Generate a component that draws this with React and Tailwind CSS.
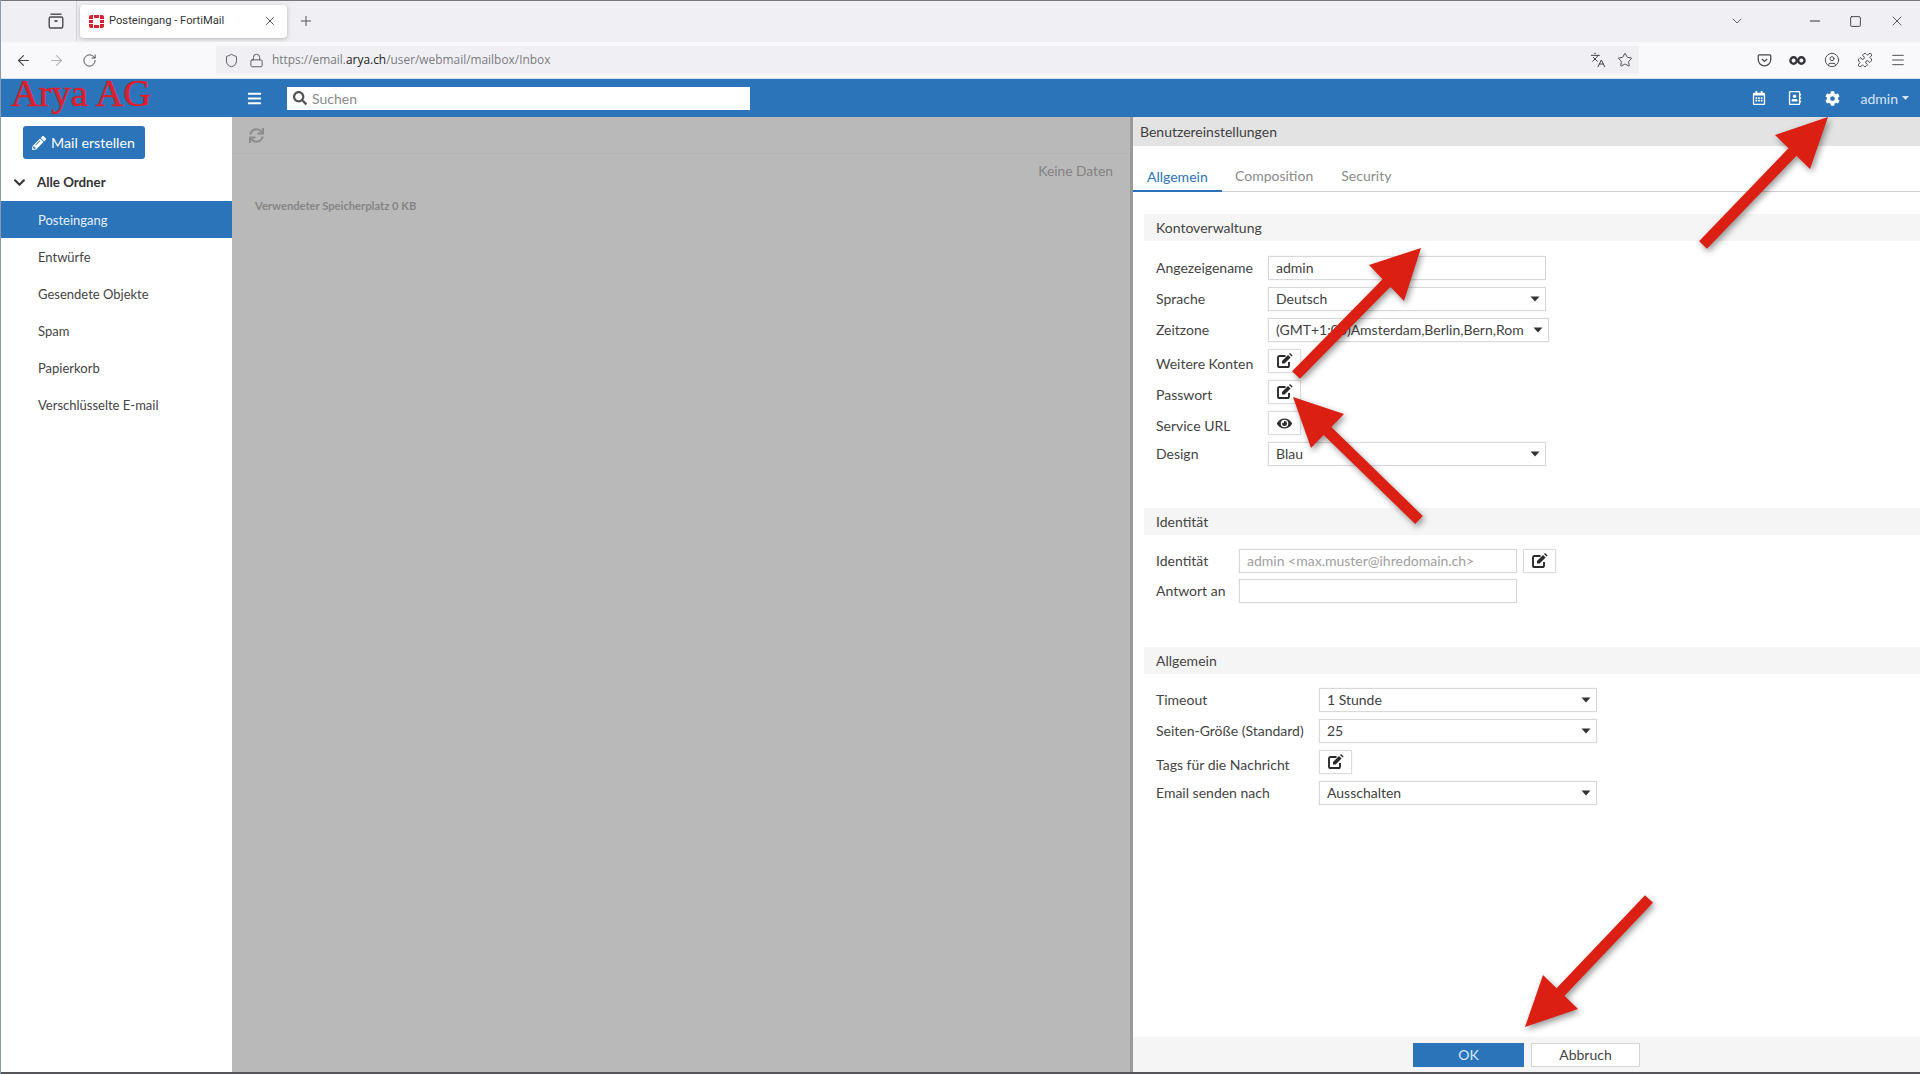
import React from "react";
import { ArrowLeft, ArrowRight, RotateCw, Shield, Lock, Languages, Star, Puzzle, Menu, ChevronDown, Minus, Square, X, Plus, CircleUser } from "lucide-react";
import { FaBars, FaSearch, FaPencilAlt, FaChevronDown, FaSync, FaEye, FaCog, FaRegCalendarAlt, FaRegAddressBook } from "react-icons/fa";

const lato = "font-['Lato','Open_Sans',sans-serif]";

function Arrow({ tip, c1, c2, tail, w }) {
  const mx = (c1[0] + c2[0]) / 2;
  const my = (c1[1] + c2[1]) / 2;
  const dx = tail[0] - mx;
  const dy = tail[1] - my;
  const len = Math.hypot(dx, dy);
  const nx = (-dy / len) * w;
  const ny = (dx / len) * w;
  const side = (c1[0] - mx) * nx + (c1[1] - my) * ny;
  const s = side < 0 ? -1 : 1;
  const pts = [tip, c1, [mx + s * nx, my + s * ny], [tail[0] + s * nx, tail[1] + s * ny], [tail[0] - s * nx, tail[1] - s * ny], [mx - s * nx, my - s * ny], c2];
  return <polygon points={pts.map((p) => p.join(",")).join(" ")} fill="#dc1f13" />;
}

function EditIcon() {
  return (
    <svg width="17" height="16" viewBox="0 0 17 16">
      <path d="M9.5 3H3.6A1.6 1.6 0 0 0 2 4.6v7.8A1.6 1.6 0 0 0 3.6 14h7.8a1.6 1.6 0 0 0 1.6-1.6V9" fill="none" stroke="#2a2a2a" strokeWidth="1.9" />
      <path d="M6 8l6-6 2.6 2.6-6 6H6z" fill="#2a2a2a" />
      <path d="M13 1l1-1 2.6 2.6-1 1z" fill="#2a2a2a" />
    </svg>
  );
}

function Field({ children, muted, wide, caret }) {
  return (
    <div className={`h-[24px] ${wide ? "w-[281px]" : "w-[278px]"} border border-[#d8d8d8] bg-white pl-[7px] pr-[5px] pb-[1px] flex items-center justify-between text-[14px] ${muted ? "text-[#a0a0a0]" : "text-[#3f3f3f]"} shadow-[0_0_2px_rgba(0,0,0,0.08)]`}>
      <span className="whitespace-nowrap overflow-hidden">{children}</span>
      {caret && (
        <svg width="10" height="6" viewBox="0 0 10 6" className="shrink-0 ml-[5px]">
          <path d="M0.5 0.5h9L5 5.5z" fill="#333" />
        </svg>
      )}
    </div>
  );
}

function IconBtn({ children }) {
  return (
    <button className="w-[33px] h-[24px] border border-[#dcdcdc] bg-white flex items-center justify-center text-[#2e2e2e] text-[15px] shadow-[0_0_2px_rgba(0,0,0,0.08)]">
      {children}
    </button>
  );
}

function Row({ label, col, lift, children }) {
  return (
    <div className="flex h-[24px] items-center">
      <div className={`${col} shrink-0 text-[14px] text-[#444] whitespace-nowrap ${lift ? "pt-[4px]" : "pb-[1px]"}`}>{label}</div>
      {children}
    </div>
  );
}

function SectionHead({ children, className = "" }) {
  return <div className={`ml-[11px] h-[27px] bg-[#f5f5f5] pl-[12px] flex items-center text-[14px] text-[#444] ${className}`}>{children}</div>;
}

const folders = ["Posteingang", "Entwürfe", "Gesendete Objekte", "Spam", "Papierkorb", "Verschlüsselte E-mail"];

export default function App() {
  return (
    <div className="relative w-[1920px] h-[1074px] overflow-hidden flex flex-col bg-white border-l border-[#8a9bb0]">
      {/* tab strip */}
      <div className="h-[42px] shrink-0 bg-[#f0f0f4] border-t border-[#77777c] pb-[1px] flex items-center font-['Open_Sans',sans-serif] text-[#3a3a3f]">
        <div className="w-[76px] h-full shrink-0 pl-[46px] flex items-center border-r border-[#d4d4da]">
          <svg width="18" height="18" viewBox="0 0 18 18" fill="none" stroke="#4a4a4f" strokeWidth="1.4">
            <path d="M3.5 2.2h11" />
            <rect x="2.2" y="5" width="13.6" height="11" rx="1.5" />
            <path d="M7.5 9h3" strokeWidth="1.8" />
          </svg>
        </div>
        <div className="ml-[3px] w-[207px] h-[33px] bg-white rounded-[4px] shadow-[0_1px_4px_rgba(0,0,0,0.25)] flex items-center pl-[9px] pr-[10px]">
          <svg width="15" height="13" viewBox="0 0 15 13" fill="#d8202e" className="shrink-0">
            <path d="M0 4V2a2 2 0 0 1 2-2h2v4zM5 0h5v3H5zM11 0h2a2 2 0 0 1 2 2v2h-4zM0 5h4v3H0zM11 5h4v3h-4zM0 9h4v4H2a2 2 0 0 1-2-2zM5 10h5v3H5zM11 9h4v2a2 2 0 0 1-2 2h-2z" />
          </svg>
          <span className="ml-[5px] text-[11.2px] whitespace-nowrap text-[#333] font-['Roboto',sans-serif]">Posteingang - FortiMail</span>
          <X className="ml-auto text-[#444]" size={14} strokeWidth={1.6} />
        </div>
        <Plus className="ml-[11px] text-[#555]" size={16} strokeWidth={1.5} />
        <ChevronDown className="ml-auto mr-[62px] text-[#555]" size={16} strokeWidth={1.4} />
        <Minus className="text-[#333]" size={16} strokeWidth={1.6} />
        <Square className="ml-[26px] text-[#333]" size={13} strokeWidth={1.6} />
        <X className="ml-[27px] mr-[15px] text-[#333]" size={16} strokeWidth={1.2} />
      </div>

      {/* nav bar */}
      <div className="h-[36px] shrink-0 bg-[#f9f9fb] flex items-center pl-[6px] font-['Open_Sans',sans-serif]">
        <div className="w-[33px] flex justify-center text-[#44444a]"><ArrowLeft size={17} strokeWidth={1.5} /></div>
        <div className="w-[33px] flex justify-center text-[#b4b4b8]"><ArrowRight size={17} strokeWidth={1.5} /></div>
        <div className="w-[33px] flex justify-center text-[#44444a]"><RotateCw size={15} strokeWidth={1.5} /></div>
        <div className="ml-[110px] w-[1423px] h-[28px] bg-[#f0f0f4] flex items-center pl-[8px] pr-[6px]">
          <Shield size={15} strokeWidth={1.5} className="text-[#55555a]" />
          <Lock size={15} strokeWidth={1.5} className="ml-[10px] text-[#55555a]" />
          <span className="ml-[8px] text-[11.9px] text-[#7b7b80] whitespace-nowrap">
            https://email.<span className="text-[#222]">arya.ch</span>/user/webmail/mailbox/Inbox
          </span>
          <Languages size={16} strokeWidth={1.5} className="ml-auto text-[#44444a]" />
          <Star size={16} strokeWidth={1.4} className="ml-[11px] text-[#44444a]" />
        </div>
        <div className="ml-auto mr-[14px] w-[149px] flex items-center justify-between text-[#44444a]">
          <svg width="15" height="15" viewBox="0 0 16 16" fill="none" stroke="#44444a" strokeWidth="1.3">
            <path d="M2.5 2h11A1.2 1.2 0 0 1 14.7 3.2V7A6.7 6.7 0 0 1 1.3 7V3.2A1.2 1.2 0 0 1 2.5 2z" />
            <path d="M5.2 6.4L8 9l2.8-2.6" />
          </svg>
          <svg width="17" height="9" viewBox="0 0 17 9" fill="none" stroke="#33333a" strokeWidth="2.4">
            <circle cx="4.6" cy="4.5" r="3.2" />
            <circle cx="12.4" cy="4.5" r="3.2" />
          </svg>
          <CircleUser size={16} strokeWidth={1.4} />
          <Puzzle size={16} strokeWidth={1.4} />
          <Menu size={16} strokeWidth={1.4} />
        </div>
      </div>

      {/* app header */}
      <div className={`h-[39px] shrink-0 bg-[#2b74ba] border-t border-[#cfe0ef] flex items-center ${lato}`}>
        <div className="w-[231px] h-full shrink-0 relative">
          <span className="absolute left-[10px] top-[-8px] text-[38.5px] leading-[44px] text-[#d8202e] [-webkit-text-stroke:0.6px_#d8202e] font-['Liberation_Serif',serif] whitespace-nowrap">Arya AG</span>
        </div>
        <FaBars className="ml-[15px] text-white text-[15px]" />
        <div className="ml-[25px] w-[463px] h-[23px] bg-white flex items-center pl-[6px] text-[14px] text-[#8a8a8a]">
          <FaSearch className="text-[#555] text-[14px]" />
          <span className="ml-[5px]">Suchen</span>
        </div>
        <div className="ml-auto flex items-center text-white pr-[11px]">
          <FaRegCalendarAlt className="text-[14px]" />
          <FaRegAddressBook className="ml-[22px] text-[14px]" />
          <FaCog className="ml-[23px] text-[15px]" />
          <span className="ml-[21px] text-[14px] text-[#d5e6f5]">admin</span>
          <svg width="7" height="4" viewBox="0 0 7 4" className="ml-[4px]"><path d="M0 0h7L3.5 4z" fill="#d5e6f5" /></svg>
        </div>
      </div>

      {/* body */}
      <div className={`flex-1 min-h-0 flex ${lato}`}>
        <aside className="w-[231px] shrink-0 bg-white pt-[9px]">
          <button className="ml-[22px] w-[122px] h-[33px] bg-[#2b74ba] rounded-[3px] flex items-center pl-[9px] text-white text-[14.2px]">
            <FaPencilAlt className="text-[14px]" />
            <span className="ml-[5px] whitespace-nowrap">Mail erstellen</span>
          </button>
          <div className="h-[42px] pt-[5px] flex items-center pl-[12px] text-[#333]">
            <FaChevronDown className="text-[13px]" />
            <span className="ml-[11px] text-[13.3px] font-bold">Alle Ordner</span>
          </div>
          {folders.map((f, i) => (
            <div key={f} className={`h-[37px] pt-[2px] flex items-center pl-[37px] text-[13px] ${i === 0 ? "bg-[#2b74ba] text-[#e6f0fa]" : "text-[#444]"}`}>
              {f}
            </div>
          ))}
        </aside>

        <main className="w-[898px] shrink-0 bg-[#b9b9b9]">
          <div className="h-[37px] border-b border-[#b2b2b2] pl-[17px] flex items-center">
            <FaSync className="text-[15px] text-[#8c8c8c]" />
          </div>
          <div className="h-[35px] flex items-center justify-end pr-[17px] text-[13.8px] text-[#828282]">Keine Daten</div>
          <div className="pl-[23px] pt-[9px] text-[11.2px] font-bold text-[#858585]">Verwendeter Speicherplatz 0 KB</div>
        </main>

        <section className="flex-1 min-w-0 bg-white border-l-[3px] border-[#9a9a9a] flex flex-col">
          <div className="h-[29px] shrink-0 bg-[#e3e3e3] pl-[7px] flex items-center text-[14px] text-[#3f3f3f]">Benutzereinstellungen</div>
          <div className="h-[46px] shrink-0 border-b border-[#cfcfcf] flex items-end text-[14px] text-[#8a8a8a]">
            <div className="w-[89px] h-[46px] -mb-px border-b-2 border-[#2b74ba] pl-[14px] pt-[20px] text-[#2b74ba]">Allgemein</div>
            <div className="ml-[13px] h-[46px] pt-[20px]">Composition</div>
            <div className="ml-[28px] h-[46px] pt-[20px]">Security</div>
          </div>

          <SectionHead className="mt-[22px]">Kontoverwaltung</SectionHead>
          <div className="mt-[15px] pl-[23px] flex flex-col gap-[7px]">
            <Row label="Angezeigename" col="w-[112px]"><Field>admin</Field></Row>
            <Row label="Sprache" col="w-[112px]"><Field caret>Deutsch</Field></Row>
            <Row label="Zeitzone" col="w-[112px]"><Field caret wide>(GMT+1:00)Amsterdam,Berlin,Bern,Rom</Field></Row>
            <Row label="Weitere Konten" col="w-[112px]" lift><IconBtn><EditIcon /></IconBtn></Row>
            <Row label="Passwort" col="w-[112px]" lift><IconBtn><EditIcon /></IconBtn></Row>
            <Row label="Service URL" col="w-[112px]" lift><IconBtn><FaEye /></IconBtn></Row>
            <Row label="Design" col="w-[112px]"><Field caret>Blau</Field></Row>
          </div>

          <SectionHead className="mt-[42px]">Identität</SectionHead>
          <div className="mt-[14px] pl-[23px] flex flex-col gap-[6px]">
            <Row label="Identität" col="w-[83px]">
              <Field muted>{"admin <max.muster@ihredomain.ch>"}</Field>
              <div className="ml-[6px]"><IconBtn><EditIcon /></IconBtn></div>
            </Row>
            <Row label="Antwort an" col="w-[83px]"><Field /></Row>
          </div>

          <SectionHead className="mt-[44px]">Allgemein</SectionHead>
          <div className="mt-[14px] pl-[23px] flex flex-col gap-[7px]">
            <Row label="Timeout" col="w-[163px]"><Field caret>1 Stunde</Field></Row>
            <Row label="Seiten-Größe (Standard)" col="w-[163px]"><Field caret>25</Field></Row>
            <Row label="Tags für die Nachricht" col="w-[163px]" lift><IconBtn><EditIcon /></IconBtn></Row>
            <Row label="Email senden nach" col="w-[163px]"><Field caret>Ausschalten</Field></Row>
          </div>

          <div className="mt-auto h-[35px] shrink-0 bg-[#f5f5f5] flex items-center justify-center gap-[7px] text-[14px]">
            <button className="w-[111px] h-[24px] bg-[#2b74ba] text-[#d9e9f7]">OK</button>
            <button className="w-[109px] h-[24px] bg-white border border-[#d4d4d4] text-[#444]">Abbruch</button>
          </div>
        </section>
      </div>
      <div className="h-[2px] shrink-0 bg-[#55555a]" />

      {/* annotation arrows drawn over the screenshot */}
      <svg width="1920" height="1074" viewBox="0 0 1920 1074" className="absolute left-0 top-0 pointer-events-none drop-shadow-[2px_3px_3px_rgba(0,0,0,0.4)]">
        <Arrow tip={[1827, 117]} c1={[1774, 135]} c2={[1809, 169]} tail={[1702, 245]} w={5.5} />
        <Arrow tip={[1420, 248]} c1={[1368, 265]} c2={[1403, 301]} tail={[1295, 375]} w={5.5} />
        <Arrow tip={[1292, 397]} c1={[1343, 414]} c2={[1310, 448]} tail={[1418, 520]} w={5.5} />
        <Arrow tip={[1524, 1027]} c1={[1542, 975]} c2={[1577, 1009]} tail={[1648, 899]} w={5.5} />
      </svg>
    </div>
  );
}
